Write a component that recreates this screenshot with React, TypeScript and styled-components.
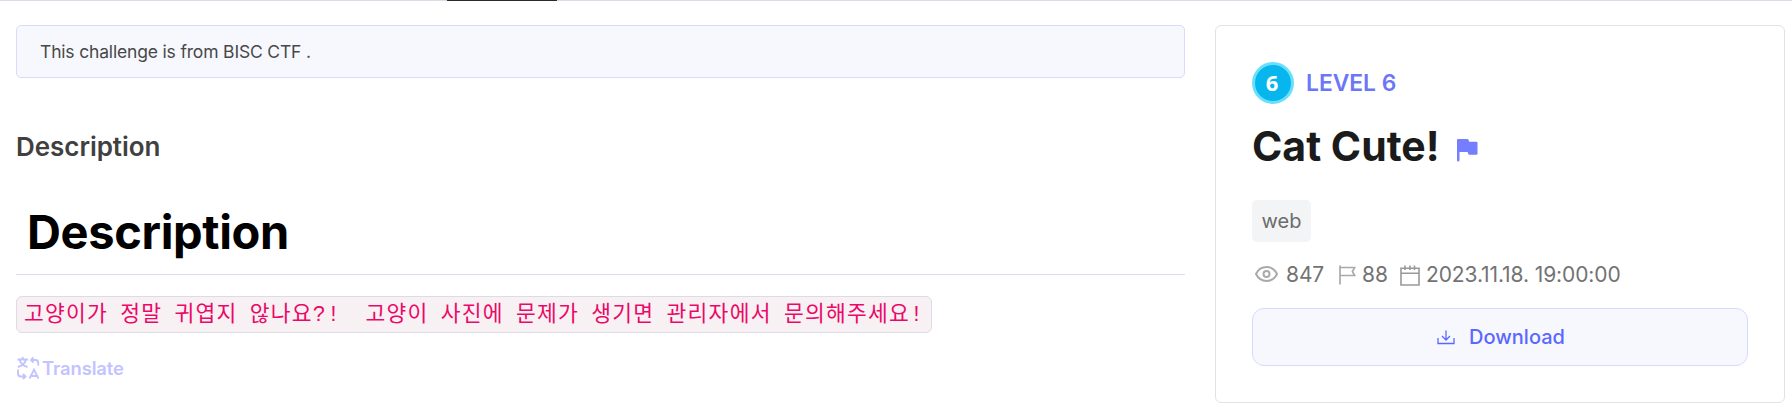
import React from 'react';
import styled, { createGlobalStyle } from 'styled-components';

const Global = createGlobalStyle`
  *, *::before, *::after { box-sizing: border-box; }
  body { margin: 0; background: #fff; font-family: Inter, "Noto Sans CJK KR", sans-serif; }
  h1, h2, p { margin: 0; }
  svg { flex-shrink: 0; }
`;
const Page = styled.div`height: 412px; overflow: hidden;`;
const TabLine = styled.div`height: 1px; background: #dcdbe7; padding-left: 447px;`;
const ActiveTab = styled.div`width: 110px; height: 1px; background: #2a2930;`;
const Columns = styled.div`
  display: grid; grid-template-columns: 1169px 570px; column-gap: 30px;
  padding: 24px 0 0 16px; align-items: start;
`;
const Main = styled.main`display: flex; flex-direction: column; align-items: stretch;`;
const Notice = styled.div`
  height: 53px; border: 1px solid #d9dafc; border-radius: 5px; background: #f6f8fe;
  padding-left: 23px; display: flex; align-items: center;
  font-size: 17.5px; letter-spacing: -0.17px; color: #484848;
`;
const SectionTitle = styled.h2`
  margin-top: 53px; font-size: 26px; line-height: 32px; font-weight: 600; color: #404040;
  letter-spacing: -0.05px;
`;
const Heading = styled.h1`
  margin-top: 40px; height: 72px; padding-left: 11px; border-bottom: 1px solid #dcdbe7;
  font-size: 47px; line-height: 57px; font-weight: 700; letter-spacing: -0.35px; color: #000;
`;
const Code = styled.code`
  margin-top: 21px; width: 916px; height: 37px; padding-left: 7px; border: 1px solid #dcdbe7;
  border-radius: 6px; background: #f8f1f4; color: #ec0868; white-space: pre;
  font-family: "Liberation Mono", "Noto Sans CJK KR", monospace; font-weight: 400;
  font-size: 21.5px; line-height: 36px; letter-spacing: 1.23px; word-spacing: -1.9px;
`;
const Translate = styled.div`
  margin-top: 22px; display: flex; align-items: center; gap: 2px; height: 26px; padding-left: 1px;
  font-size: 18.4px; font-weight: 600; letter-spacing: -0.1px; color: #c3c4ff;
`;
const Card = styled.aside`
  height: 378px; border: 1px solid #e2e2e4; border-radius: 6px; padding: 36px 36px 0;
`;
const LevelRow = styled.div`
  display: flex; align-items: center; gap: 12px; height: 42px;
`;
const LevelText = styled.span`
  padding-bottom: 2px; font-size: 22.8px; font-weight: 600; color: #6b76f8;
`;
const Badge = styled.span`
  width: 42px; height: 42px; border-radius: 50%; border: 3px solid #68e0fc; background: #07b6ec;
  display: flex; align-items: center; justify-content: center; padding: 0 2px 2px 0;
  font: 700 22px "Open Sans", sans-serif; color: #fff;
`;
const Title = styled.h1`
  margin-top: 16px; height: 51px; display: flex; align-items: center; gap: 17px;
  font-size: 41px; font-weight: 700; color: #1b1b1b;
  svg { margin-top: 10px; }
`;
const Tag = styled.span`
  margin-top: 29px; width: 59px; height: 42px; border-radius: 5px; background: #f2f4f6;
  display: flex; align-items: center; justify-content: center; font-size: 20px; color: #6c6c6c;
`;
const Stats = styled.div`
  margin-top: 20px; height: 26px; display: flex; align-items: center; font-size: 21px; color: #737373;
`;
const Stat = styled.span<{ $gap: number; $width: number }>`
  display: flex; align-items: center; gap: ${p => p.$gap}px; width: ${p => p.$width}px;
  padding-bottom: 1px; white-space: nowrap; flex-shrink: 0; letter-spacing: -0.1px;
`;
const Download = styled.button`
  margin-top: 20px; width: 496px; height: 58px; border: 1px solid #d9d9fd; border-radius: 12px;
  background: #f6f8fe; display: flex; align-items: center; justify-content: center; gap: 14px;
  font: 500 20px Inter, sans-serif; color: #5b68ff; padding: 0 0 0 2px;
`;

export default function App() {
  return (
    <Page>
      <Global />
      <TabLine><ActiveTab /></TabLine>
      <Columns>
        <Main>
          <Notice>This challenge is from BISC CTF .</Notice>
          <SectionTitle>Description</SectionTitle>
          <Heading>Description</Heading>
          <Code>{'고양이가 정말 귀엽지 않나요?!  고양이 사진에 문제가 생기면 관리자에서 문의해주세요!'}</Code>
          <Translate>
            <svg width="23" height="24" viewBox="0 0 23 24" fill="none" stroke="currentColor" strokeWidth="1.9">
              <path d="M0.5 3.5H11M5.7 1V3.5M2.5 3.5C3.5 7.5 6.5 10 10.5 11M9 3.5C8 7.5 5 10 0.8 11" />
              <path d="M14 4H18.5Q21.2 4 21.2 6.5V9.5M16.5 1.4L14 4L16.5 6.6" />
              <path d="M1 13.5V17.5Q1 20.5 4 20.5H8.5M6 18L8.5 20.5L6 23" />
              <path d="M12.5 22.7L17 13.7L21.5 22.7M14 20H20" />
            </svg>
            Translate
          </Translate>
        </Main>
        <Card>
          <LevelRow><Badge>6</Badge><LevelText>LEVEL 6</LevelText></LevelRow>
          <Title>
            Cat Cute!
            <svg width="21" height="23" viewBox="0 0 21 23" fill="#747eff">
              <path d="M1 0H10.2Q11.2 0 11.6 1L12.2 2.8H19.5Q20.5 2.8 20.5 3.8V14.7Q20.5 15.7 19.5 15.7H12.5Q11.5 15.7 11.2 14.8L10.6 13H2.5V21.2Q2.5 22.4 1.2 22.4Q0 22.4 0 21.2V1Q0 0 1 0Z" />
            </svg>
          </Title>
          <Tag>web</Tag>
          <Stats>
            <Stat $gap={8} $width={87}>
              <svg width="26" height="20" viewBox="0 0 26 20" fill="none" stroke="#aaa" strokeWidth="2">
                <path d="M4 9C8.5 -0.2 20.5 -0.2 25 9C20.5 18.2 8.5 18.2 4 9Z" />
                <circle cx="14.5" cy="9" r="3" />
              </svg>
              847
            </Stat>
            <Stat $gap={6} $width={61}>
              <svg width="17" height="20" viewBox="0 0 17 20" fill="none" stroke="#aaa" strokeWidth="1.7">
                <path d="M1 0.5V19.5M1 2.5H15.6L13.4 6.5L15.6 10.5H1" />
              </svg>
              88
            </Stat>
            <Stat $gap={6} $width={220}>
              <svg width="20" height="22" viewBox="0 0 20 22" fill="none" stroke="#999" strokeWidth="1.6">
                <path d="M1 4.2H19V21H1ZM1 9.3H19M5 1.5V6M10 1.5V6M14.5 1.5V6" />
              </svg>
              2023.11.18. 19:00:00
            </Stat>
          </Stats>
          <Download>
            <svg width="18" height="15" viewBox="0 0 18 15" fill="none" stroke="currentColor" strokeWidth="1.3">
              <path d="M1 8V13.5H17V8M9 0.5V9.5M5 6L9 10L13 6" />
            </svg>
            Download
          </Download>
        </Card>
      </Columns>
    </Page>
  );
}
